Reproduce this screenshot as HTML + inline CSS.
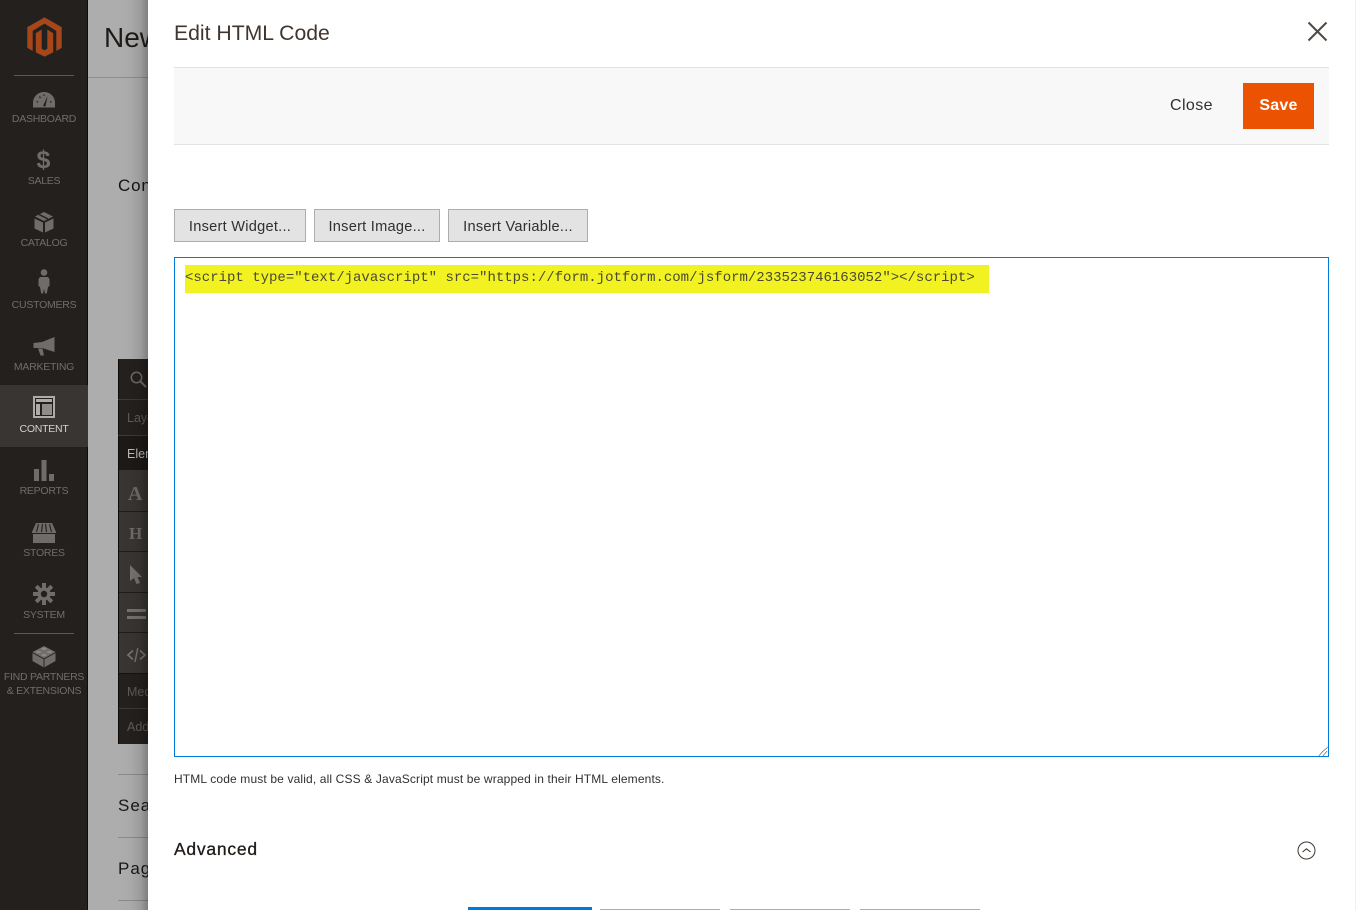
<!DOCTYPE html>
<html><head><meta charset="utf-8"><style>
html,body{margin:0;padding:0}
body{width:1356px;height:910px;overflow:hidden;position:relative;background:#fff;font-family:"Liberation Sans",sans-serif}
.a{position:absolute}
.t{position:absolute;white-space:nowrap}
#bg{left:0;top:0;width:148px;height:910px;background:#adadad}
#side{left:0;top:0;width:87px;height:910px;background:#24201d;border-right:1px solid #0f0d0c}
.n{position:absolute;left:0;width:88px;text-align:center;font-size:10.5px;line-height:12px;color:#706d6a;white-space:nowrap;letter-spacing:-.25px}
.d{position:absolute;left:14px;width:60px;height:1px;background:#5d5955}
.b{position:absolute;top:209px;height:31px;background:#e3e3e3;border:1px solid #adadad;font-size:14.6px;line-height:35px;text-align:center;color:#303030;letter-spacing:.25px}
.row{position:absolute;left:118px;width:30px;border-bottom:1px solid #26221f}
svg{position:absolute;overflow:visible}
</style></head><body>
<div class="a" id="bg"></div>
<div class="a" style="left:88px;top:77px;width:60px;height:1px;background:#8e8e8e"></div>
<div class="t" style="left:104px;top:21px;font-size:28px;line-height:34px;color:#1e1b19;width:44px;overflow:hidden">New</div>
<div class="t" style="left:118px;top:176px;font-size:17px;line-height:20px;color:#161412;width:30px;overflow:hidden;font-weight:400;letter-spacing:.8px">Con</div>

<div class="a" style="left:118px;top:359px;width:30px;height:385px;background:#24201d;border-left:1px solid #0e0c0b;box-sizing:border-box"></div>
<div class="row" style="top:359px;height:40px;border-color:#3d3a37"></div>
<svg style="left:130px;top:371px" width="17" height="17" viewBox="0 0 17 17"><circle cx="6.500" cy="6.500" r="5.200" fill="none" stroke="#6d6a67" stroke-width="1.500"/><path d="M10.500 10.500L16 16" stroke="#6d6a67" stroke-width="2"/></svg>
<div class="row" style="top:400px;height:35px;border-color:#3d3a37"></div>
<div class="t" style="left:127px;top:410px;font-size:12.5px;line-height:16px;color:#5f5c59;width:21px;overflow:hidden">Layout</div>
<div class="a" style="left:119px;top:436px;width:29px;height:34px;background:#1c1916"></div>
<div class="t" style="left:127px;top:446px;font-size:12.5px;line-height:16px;color:#bdbbb9;width:21px;overflow:hidden">Elements</div>
<div class="a" style="left:119px;top:470px;width:29px;height:204px;background:#383532"></div>
<div class="a" style="left:119px;top:511px;width:29px;height:1px;background:#1f1c19"></div>
<div class="a" style="left:119px;top:551px;width:29px;height:1px;background:#1f1c19"></div>
<div class="a" style="left:119px;top:592px;width:29px;height:1px;background:#1f1c19"></div>
<div class="a" style="left:119px;top:632px;width:29px;height:1px;background:#1f1c19"></div>
<div class="t" style="left:128px;top:483px;font:bold 20px/23px 'Liberation Serif',serif;color:#6f6c69">A</div>
<div class="t" style="left:129px;top:524px;font:bold 17px/19px 'Liberation Serif',serif;color:#6f6c69">H</div>
<svg style="left:130px;top:565px" width="13" height="19" viewBox="0 0 13 19"><path d="M0 0L12 12H7.500L10 18L6.500 19L4 13L0 16Z" fill="#757270"/></svg>
<div class="a" style="left:127px;top:609px;width:19px;height:3px;background:#757270"></div>
<div class="a" style="left:127px;top:616px;width:19px;height:3px;background:#757270"></div>
<svg style="left:127px;top:647px" width="19" height="16" viewBox="0 0 19 16"><path d="M6 3.500L1 8L6 12.500M13 3.500L18 8L13 12.500" fill="none" stroke="#757270" stroke-width="1.800"/><path d="M10.800 1L8 15" stroke="#757270" stroke-width="1.500"/></svg>
<div class="a" style="left:119px;top:673px;width:29px;height:1px;background:#151310"></div>
<div class="t" style="left:127px;top:684px;font-size:12.5px;line-height:16px;color:#5f5c59;width:21px;overflow:hidden">Media</div>
<div class="a" style="left:119px;top:708px;width:29px;height:1px;background:#3d3a37"></div>
<div class="t" style="left:127px;top:719px;font-size:12.5px;line-height:16px;color:#5f5c59;width:21px;overflow:hidden">Add</div>

<div class="a" style="left:118px;top:774px;width:30px;height:1px;background:#8a8a8a"></div>
<div class="t" style="left:118px;top:796px;font-size:17px;line-height:20px;color:#1a1816;width:30px;overflow:hidden;letter-spacing:1px">Search</div>
<div class="a" style="left:118px;top:837px;width:30px;height:1px;background:#8a8a8a"></div>
<div class="t" style="left:118px;top:859px;font-size:17px;line-height:20px;color:#1a1816;width:30px;overflow:hidden;letter-spacing:1px">Page</div>
<div class="a" style="left:118px;top:900px;width:30px;height:1px;background:#8a8a8a"></div>
<div class="a" style="left:118px;top:0;width:30px;height:910px;background:linear-gradient(to right,rgba(0,0,0,0) 0,rgba(0,0,0,.02) 40%,rgba(0,0,0,.1) 75%,rgba(0,0,0,.27) 100%)"></div>

<div class="a" id="side">
<svg style="left:26px;top:16px" width="37" height="42" viewBox="0 0 37 42"><path d="M18.500 1L36 11V32L30 35.500V15L18.500 8L7 15V35.500L1 32V11Z" fill="#a84519" stroke="#12282c" stroke-width=".6"/><path d="M9.500 17L16 13V32.500L18.500 34L21 32.500V13L27.500 17V36.500L18.500 41L9.500 36.500Z" fill="#a84519" stroke="#12282c" stroke-width=".6"/></svg>
<div class="d" style="top:75px"></div>
<svg style="left:32px;top:91px" width="24" height="17" viewBox="0 0 24 17"><path d="M1 16.500V12C1 5.500 6 1 12 1S23 5.500 23 12V16.500Z" fill="#6f6c6a"/><path d="M11 15L15.500 5L13.500 15.500Z" fill="#24201d"/><path d="M4.500 10.500L6 11.200M7.500 5.500L8.500 7M12 3.500V5M19.500 10.500L18 11.200" stroke="#24201d" stroke-width="1.200"/></svg>
<div class="n" style="top:113px">DASHBOARD</div>
<div class="t" style="left:0;width:87px;text-align:center;top:147px;font:bold 25px/27px 'Liberation Sans',sans-serif;color:#6f6c6a">$</div>
<div class="n" style="top:175px">SALES</div>
<svg style="left:34px;top:212px" width="20" height="21" viewBox="0 0 20 21"><path d="M10 0L19 4.500L10 9L1 4.500Z" fill="#6f6c6a"/><path d="M0.500 6.500L9 10.500V20.500L0.500 16.500ZM19.500 6.500V16.500L11 20.500V10.500Z" fill="#6f6c6a"/><path d="M5 2.500L14 7" stroke="#24201d" stroke-width="1.500"/></svg>
<div class="n" style="top:237px">CATALOG</div>
<svg style="left:38px;top:269px" width="12" height="25" viewBox="0 0 12 25"><circle cx="6" cy="3.500" r="3.300" fill="#6f6c6a"/><path d="M2 8H10L11.500 10V17L10 18L8.800 24.500H7L6 20L5 24.500H3.200L2 18L.5 17V10Z" fill="#6f6c6a"/></svg>
<div class="n" style="top:299px">CUSTOMERS</div>
<svg style="left:33px;top:337px" width="22" height="19" viewBox="0 0 22 19"><path d="M21.500 0V15L9 11H0.500V6L9 5Z" fill="#6f6c6a"/><path d="M5 11.500H9.500L11 18.500H7.500Z" fill="#6f6c6a"/></svg>
<div class="n" style="top:361px">MARKETING</div>
<div class="a" style="left:0;top:385px;width:88px;height:62px;background:#383532"></div>
<svg style="left:33px;top:396px" width="22" height="22" viewBox="0 0 22 22"><rect x="1" y="1" width="20" height="20" fill="#24201d" stroke="#aeaca9" stroke-width="2"/><rect x="3" y="3" width="16" height="3" fill="#aeaca9"/><rect x="3" y="8" width="4" height="11" fill="#aeaca9"/><rect x="9" y="8" width="10" height="11" fill="#8f8d8a"/></svg>
<div class="n" style="top:423px;color:#d4d3d1">CONTENT</div>
<svg style="left:34px;top:460px" width="20" height="21" viewBox="0 0 20 21"><rect x="0" y="9" width="5" height="12" fill="#6f6c6a"/><rect x="7.500" y="0" width="5" height="21" fill="#6f6c6a"/><rect x="15" y="14" width="5" height="7" fill="#6f6c6a"/></svg>
<div class="n" style="top:485px">REPORTS</div>
<svg style="left:32px;top:523px" width="24" height="20" viewBox="0 0 24 20"><path d="M4 0H20L24 9V10H0V9Z" fill="#6f6c6a"/><path d="M6.500 1L4.500 9M10.500 1L9.500 9M13.500 1L14.500 9M17.500 1L19.500 9" stroke="#24201d" stroke-width="1.100"/><rect x="1" y="11" width="22" height="9" fill="#6f6c6a"/></svg>
<div class="n" style="top:547px">STORES</div>
<svg style="left:33px;top:583px" width="22" height="22" viewBox="0 0 22 22"><g stroke="#6f6c6a" stroke-width="4"><path d="M11 0V22M0 11H22M3.200 3.200L18.800 18.800M18.800 3.200L3.200 18.800"/></g><circle cx="11" cy="11" r="6.500" fill="#6f6c6a"/><circle cx="11" cy="11" r="3.200" fill="#24201d"/></svg>
<div class="n" style="top:609px">SYSTEM</div>
<div class="d" style="top:633px"></div>
<svg style="left:32px;top:645px" width="24" height="23" viewBox="0 0 24 23"><path d="M12 1L23.500 7V16L12 22.500L.5 16V7Z" fill="#6f6c6a"/><path d="M.5 7.500L12 14L23.500 7.500M12 14V22" fill="none" stroke="#24201d" stroke-width=".9"/><ellipse cx="12" cy="3.800" rx="2.800" ry="1.300" fill="#8a8785"/><ellipse cx="6.500" cy="7" rx="2.800" ry="1.300" fill="#8a8785"/><ellipse cx="17.500" cy="7" rx="2.800" ry="1.300" fill="#8a8785"/><ellipse cx="12" cy="10" rx="2.800" ry="1.300" fill="#8a8785"/></svg>
<div class="n" style="top:671px">FIND PARTNERS</div>
<div class="n" style="top:685px">&amp; EXTENSIONS</div>
</div>

<div class="a" style="left:148px;top:0;width:1207px;height:910px;background:#fff"></div>
<div class="a" style="left:1355px;top:0;width:1px;height:910px;background:#f0f0f0"></div>
<div class="t" style="left:174px;top:20px;font-size:21.2px;line-height:28px;color:#41362f">Edit HTML Code</div>
<svg style="left:1308px;top:22px" width="19" height="19" viewBox="0 0 19 19"><path d="M.5 .5L18.500 18.500M18.500 .5L.5 18.500" stroke="#514943" stroke-width="2"/></svg>
<div class="a" style="left:174px;top:67px;width:1155px;height:76px;background:#f8f8f8;border-top:1px solid #e3e3e3;border-bottom:1px solid #e3e3e3"></div>
<div class="t" style="left:1170px;top:96px;font-size:16px;line-height:20px;color:#303030;letter-spacing:.4px">Close</div>
<div class="a" style="left:1243px;top:83px;width:71px;height:46px;background:#eb5202;color:#fff;font-size:16px;font-weight:bold;line-height:46px;text-align:center;letter-spacing:.2px">Save</div>

<div class="b" style="left:174px;width:130px">Insert Widget...</div>
<div class="b" style="left:314px;width:124px">Insert Image...</div>
<div class="b" style="left:448px;width:138px">Insert Variable...</div>

<div class="a" style="left:174px;top:257px;width:1153px;height:498px;border:1px solid #007bdb;background:#fff"></div>
<div class="a" style="left:185px;top:265px;width:804px;height:28px;background:#f2f222"></div>
<div class="t" style="left:185px;top:270px;font:14px/16px 'Liberation Mono',monospace;color:#4a4a30">&lt;script type="text/javascript" src="https://form.jotform.com/jsform/233523746163052"&gt;&lt;/script&gt;</div>
<svg style="left:1318px;top:746px" width="10" height="10" viewBox="0 0 10 10"><path d="M1 9.500L9.500 1M5 9.500L9.500 5" stroke="#555" stroke-width="1" stroke-dasharray="1 .6"/></svg>

<div class="t" style="left:174px;top:771px;font-size:12px;line-height:17px;color:#303030;letter-spacing:.14px">HTML code must be valid, all CSS &amp; JavaScript must be wrapped in their HTML elements.</div>
<div class="t" style="left:174px;top:838px;font-size:17.500px;line-height:22px;color:#1f1a17;letter-spacing:.75px;-webkit-text-stroke:.3px #1f1a17">Advanced</div>
<svg style="left:1297px;top:841px" width="19" height="19" viewBox="0 0 19 19"><circle cx="9.500" cy="9.500" r="8.500" fill="none" stroke="#41362f" stroke-width="1"/><path d="M5.500 11L9.500 7.800L13.500 11" fill="none" stroke="#41362f" stroke-width="1.100"/></svg>

<div class="a" style="left:468px;top:907px;width:124px;height:3px;background:#007bdb"></div>
<div class="a" style="left:600px;top:909px;width:120px;height:1px;background:#adadad"></div>
<div class="a" style="left:730px;top:909px;width:120px;height:1px;background:#adadad"></div>
<div class="a" style="left:860px;top:909px;width:120px;height:1px;background:#adadad"></div>
</body></html>
